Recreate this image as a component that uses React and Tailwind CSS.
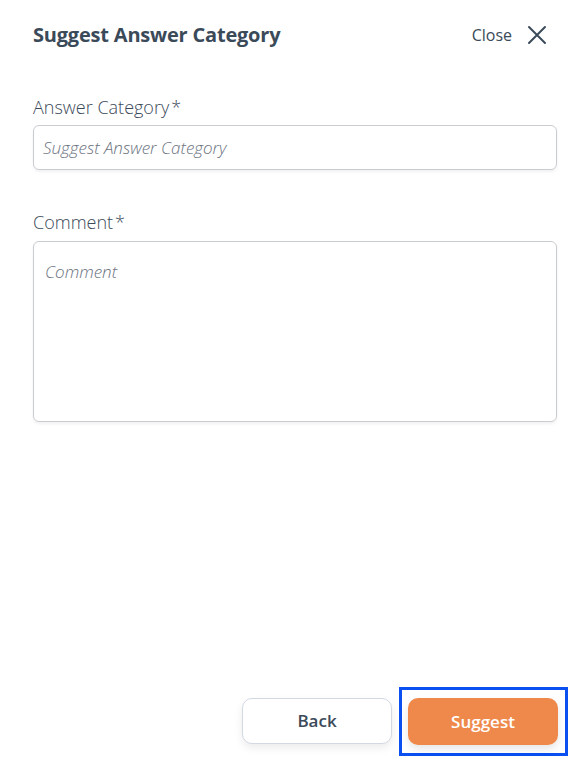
import React from "react";

export default function App() {
  return (
    <div
      className="w-[587px] h-[772px] bg-white flex flex-col pl-[33px] pr-[30px] pt-[20px] pb-[27px] text-[#3b4a59]"
      style={{ fontFamily: '"Open Sans", "Noto Sans", sans-serif' }}
    >
      <div className="flex items-center justify-between h-[30px]">
        <h1 className="text-[20px] font-bold tracking-[-0.2px] leading-[30px]">
          Suggest Answer Category
        </h1>
        <button className="flex items-center gap-[15px] text-[16px] leading-[30px] text-[#3b4a59] mr-[10px]">
          <span>Close</span>
          <svg width="20" height="20" viewBox="0 0 20 20" fill="none" stroke="#3b4a59" strokeWidth="2" strokeLinecap="round">
            <path d="M2 2 L18 18 M18 2 L2 18" />
          </svg>
        </button>
      </div>

      <div className="mt-[45px] flex flex-col">
        <label className="text-[18px] font-light leading-[24px] text-[#3b4a59]">
          Answer Category<span className="ml-[2px]">*</span>
        </label>
        <div className="mt-[6px] h-[45px] rounded-[6px] border border-[#c9ccd1] shadow-[0_2px_3px_rgba(0,0,0,0.06)] flex items-center px-[9px]">
          <span className="italic text-[17px] font-light text-[#6b7280]">
            Suggest Answer Category
          </span>
        </div>
      </div>

      <div className="mt-[40px] flex flex-col">
        <label className="text-[18px] font-light leading-[24px] text-[#3b4a59]">
          Comment<span className="ml-[2px]">*</span>
        </label>
        <div className="mt-[7px] h-[181px] rounded-[6px] border border-[#c9ccd1] shadow-[0_2px_3px_rgba(0,0,0,0.06)] px-[11px] pt-[18px]">
          <span className="italic text-[17px] font-light text-[#6b7280] leading-[24px]">
            Comment
          </span>
        </div>
      </div>

      <div className="mt-auto flex justify-end gap-[16px] mr-[-1px]">
        <button className="w-[150px] h-[46px] rounded-[10px] border border-[#d3d9e2] bg-white text-[17px] font-semibold text-[#3b4a59] shadow-[0_4px_8px_rgba(0,0,0,0.08)]">
          Back
        </button>
        <div className="-my-[11px] -mr-[10px] ml-[-9px] border-[3px] border-[#0a4ff0] pt-[8px] pb-[8px] pl-[6px] pr-[7px]">
          <button className="w-[150px] h-[47px] rounded-[10px] bg-[#ef894b] text-[17px] font-semibold text-white shadow-[0_4px_8px_rgba(0,0,0,0.1)]">
            Suggest
          </button>
        </div>
      </div>
    </div>
  );
}
